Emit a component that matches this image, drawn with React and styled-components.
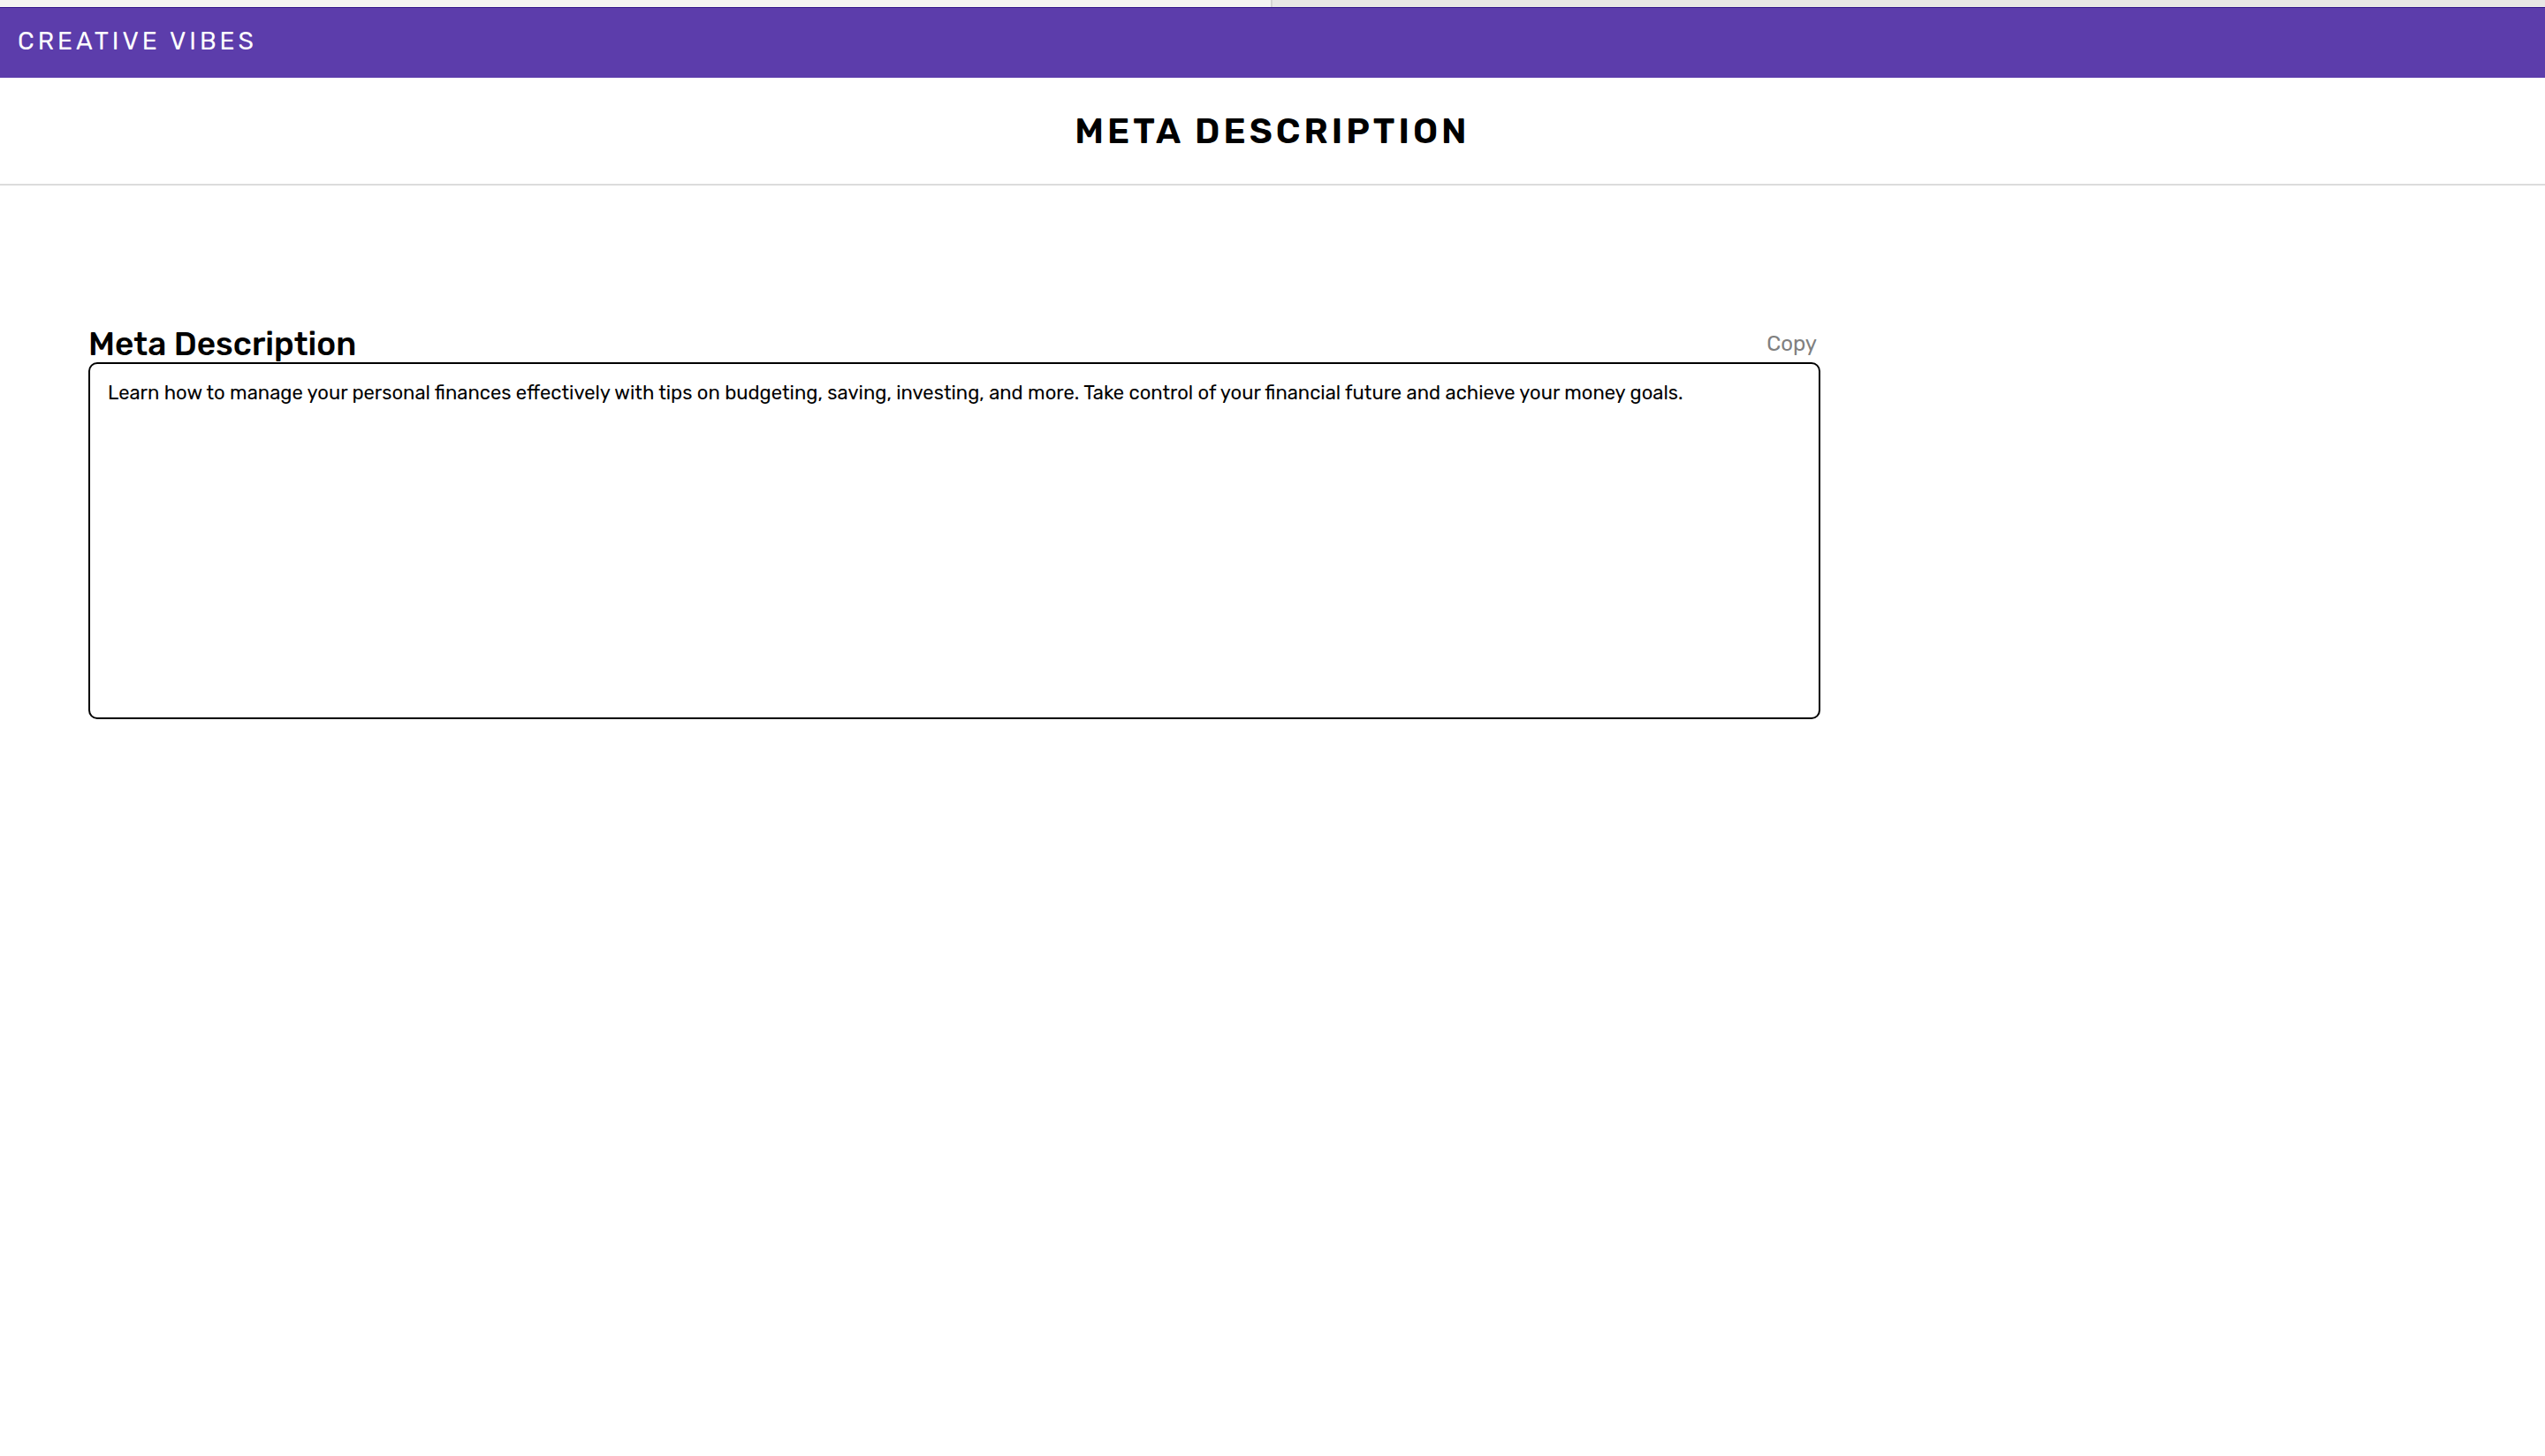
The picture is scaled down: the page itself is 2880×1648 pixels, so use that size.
import React, { useState } from "react";
import styled, { createGlobalStyle } from "styled-components";

const GlobalStyle = createGlobalStyle`
  *, *::before, *::after { box-sizing: border-box; }
  body {
    margin: 0;
    background: #ffffff;
    color: #000000;
    font-family: Rubik, Roboto, "Liberation Sans", sans-serif;
  }
`;

const TabStrip = styled.div`
  display: grid;
  grid-template-columns: 1fr 1fr;
  height: 8px;
`;

const TabEdge = styled.div`
  background: ${(p) => (p.$active ? "#f4f4f2" : "#e8e7e5")};
  border-right: ${(p) => (p.$active ? "2px solid #d4d4d2" : "0")};
`;

const TopBar = styled.header`
  display: flex;
  height: 80px;
  padding: 20px;
  background: #5c3dab;
  border-top: 1px solid #33148a;
`;

const Brand = styled.a`
  color: #ffffff;
  font-size: 28px;
  line-height: 36px;
  letter-spacing: 4px;
  text-decoration: none;
  text-transform: uppercase;
`;

const TitleBar = styled.div`
  display: flex;
  justify-content: center;
  padding: 36px 20px 34px;
  border-bottom: 2px solid #dcdcdc;
`;

const Title = styled.h1`
  margin: 0;
  font-size: 40px;
  line-height: 50px;
  font-weight: 600;
  letter-spacing: 4px;
  text-transform: uppercase;
`;

const Main = styled.main`
  padding: 156px 100px 100px;
`;

const Field = styled.section`
  max-width: 1960px;
`;

const FieldHeader = styled.div`
  display: flex;
  justify-content: space-between;
  align-items: center;
  padding: 2px 4px 0 0;
`;

const FieldLabel = styled.label`
  font-size: 37px;
  line-height: 42px;
  font-weight: 500;
`;

const CopyButton = styled.button`
  padding: 0;
  border: 0;
  background: none;
  color: #808080;
  font: inherit;
  font-size: 24px;
  line-height: 42px;
  cursor: pointer;
`;

const TextBox = styled.textarea`
  display: block;
  width: 100%;
  height: 404px;
  padding: 20px;
  border: 2px solid #000000;
  border-radius: 10px;
  outline: none;
  resize: none;
  background: #ffffff;
  color: #000000;
  font: inherit;
  font-size: 22px;
  line-height: 26px;
`;

const initialText =
  "Learn how to manage your personal finances effectively with tips on budgeting, saving, investing, and more. Take control of your financial future and achieve your money goals.";

export default function App() {
  const [text, setText] = useState(initialText);

  return (
    <>
      <GlobalStyle />
      <TabStrip aria-hidden="true">
        <TabEdge $active />
        <TabEdge />
      </TabStrip>
      <TopBar>
        <Brand href="#">Creative Vibes</Brand>
      </TopBar>
      <TitleBar>
        <Title>Meta Description</Title>
      </TitleBar>
      <Main>
        <Field>
          <FieldHeader>
            <FieldLabel htmlFor="meta-description">Meta Description</FieldLabel>
            <CopyButton type="button" onClick={() => navigator.clipboard?.writeText(text)}>
              Copy
            </CopyButton>
          </FieldHeader>
          <TextBox
            id="meta-description"
            spellCheck={false}
            value={text}
            onChange={(event) => setText(event.target.value)}
          />
        </Field>
      </Main>
    </>
  );
}
